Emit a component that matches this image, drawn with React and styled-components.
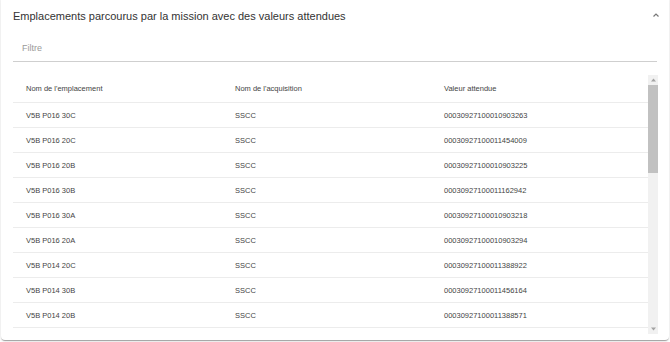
import React from "react";
import styled, { createGlobalStyle } from "styled-components";

const GlobalStyle = createGlobalStyle`
  body {
    margin: 0;
    background: #ffffff;
    font-family: "Liberation Sans", Arial, sans-serif;
  }
`;

const Page = styled.div`
  width: 670px;
  height: 342px;
  overflow: hidden;
  padding: 0 1px;
  box-sizing: border-box;
`;

const Card = styled.section`
  margin-top: -4px;
  height: 344px;
  background: #fff;
  border-radius: 4px;
  box-shadow: 0 2px 1px -1px rgba(0, 0, 0, 0.2), 0 1px 1px 0 rgba(0, 0, 0, 0.14),
    0 1px 3px 0 rgba(0, 0, 0, 0.12);
  padding: 4px 11px 0 12px;
  box-sizing: border-box;
`;

const Header = styled.div`
  display: flex;
  align-items: center;
  justify-content: space-between;
  height: 33px;
`;

const Title = styled.h2`
  margin: 0 0 1px;
  font-size: 11px;
  font-weight: 400;
  color: #333;
`;

const Chevron = styled.svg`
  width: 8px;
  height: 8px;
  margin-right: -2px;
  margin-bottom: 4px;
`;

const Filter = styled.div`
  height: 29px;
  margin-right: 1px;
  border-bottom: 1px solid #cfcfcf;
  display: flex;
  align-items: center;
  padding-left: 9px;
  padding-top: 2px;
  box-sizing: border-box;
  font-size: 9px;
  color: #9a9a9a;
`;

const TableArea = styled.div`
  margin-top: 13px;
  height: 259px;
  display: flex;
`;

const Scroller = styled.div`
  flex: 1;
  overflow: hidden;
`;

const ScrollBar = styled.div`
  width: 10px;
  background: #f1f1f1;
  display: flex;
  flex-direction: column;
`;

const ScrollButton = styled.div`
  height: 10px;
  display: flex;
  align-items: center;
  justify-content: center;
`;

const Thumb = styled.div`
  height: 88px;
  background: #c1c1c1;
`;

const Spacer = styled.div`
  flex: 1;
`;

const Table = styled.table`
  width: 635px;
  border-collapse: separate;
  border-spacing: 0;
  table-layout: fixed;
  font-size: 7.5px;
  color: #444;
`;

const HeadCell = styled.th`
  height: 27px;
  padding: 0 0 0 13px;
  text-align: left;
  font-weight: 400;
  border-bottom: 1px solid #ececec;
`;

const Cell = styled.td`
  height: 24px;
  padding: 0 0 0 13px;
  border-bottom: 1px solid #ececec;
  white-space: nowrap;
`;

const Arrow = ({ up }) => (
  <svg width="5" height="4" viewBox="0 0 5 4">
    <path d={up ? "M0 3.5 L2.5 0.5 L5 3.5 Z" : "M0 0.5 L2.5 3.5 L5 0.5 Z"} fill="#a3a3a3" />
  </svg>
);

const rows = [
  ["V5B P016 30C", "SSCC", "00030927100010903263"],
  ["V5B P016 20C", "SSCC", "00030927100011454009"],
  ["V5B P016 20B", "SSCC", "00030927100010903225"],
  ["V5B P016 30B", "SSCC", "00030927100011162942"],
  ["V5B P016 30A", "SSCC", "00030927100010903218"],
  ["V5B P016 20A", "SSCC", "00030927100010903294"],
  ["V5B P014 20C", "SSCC", "00030927100011388922"],
  ["V5B P014 30B", "SSCC", "00030927100011456164"],
  ["V5B P014 20B", "SSCC", "00030927100011388571"],
];

export default function App() {
  return (
    <>
      <GlobalStyle />
      <Page>
        <Card>
          <Header>
            <Title>Emplacements parcourus par la mission avec des valeurs attendues</Title>
            <Chevron viewBox="0 0 8 8">
              <path d="M1.5 5.5 L4 3 L6.5 5.5" fill="none" stroke="#777" strokeWidth="1.2" />
            </Chevron>
          </Header>
          <Filter>Filtre</Filter>
          <TableArea>
            <Scroller>
              <Table>
                <colgroup>
                  <col style={{ width: "209px" }} />
                  <col style={{ width: "209px" }} />
                  <col />
                </colgroup>
                <thead>
                  <tr>
                    <HeadCell>Nom de l'emplacement</HeadCell>
                    <HeadCell>Nom de l'acquisition</HeadCell>
                    <HeadCell>Valeur attendue</HeadCell>
                  </tr>
                </thead>
                <tbody>
                  {rows.map((r) => (
                    <tr key={r[0]}>
                      <Cell>{r[0]}</Cell>
                      <Cell>{r[1]}</Cell>
                      <Cell>{r[2]}</Cell>
                    </tr>
                  ))}
                </tbody>
              </Table>
            </Scroller>
            <ScrollBar>
              <ScrollButton>
                <Arrow up />
              </ScrollButton>
              <Thumb />
              <Spacer />
              <ScrollButton>
                <Arrow />
              </ScrollButton>
            </ScrollBar>
          </TableArea>
        </Card>
      </Page>
    </>
  );
}
